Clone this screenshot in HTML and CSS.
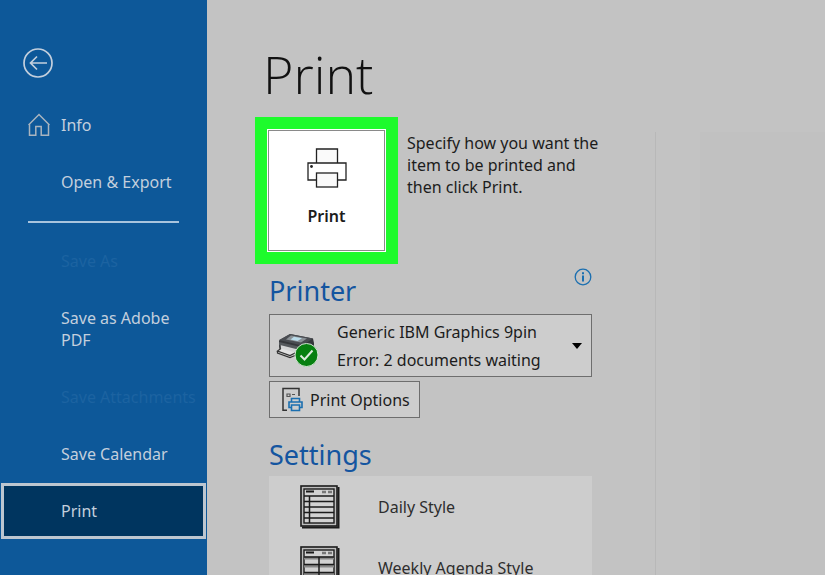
FILE: index.html
```html
<!DOCTYPE html>
<html lang="en">
<head>
  <meta charset="UTF-8">
  <title>Print</title>
  <link rel="stylesheet" href="styles.css">
</head>
<body>

<div class="app">

  <nav class="sidebar">
    <button class="back-btn" aria-label="Back">
      <svg width="30" height="30" viewBox="0 0 30 30" fill="none" stroke="currentColor" stroke-width="1.700">
        <circle cx="15" cy="15" r="14"/>
        <path d="M24 15H8M14 8.500L7.500 15l6.500 6.500"/>
      </svg>
    </button>

    <a class="nav-item" href="#info">
      <svg class="nav-icon" width="22" height="24" viewBox="0 0 22 24" fill="none" stroke="currentColor" stroke-width="1.500">
        <path d="M1.500 11V22.300H7.800V13.500H13.200V22.300H20.500V11M0.500 12L11 1.500L21.500 12"/>
      </svg>
      <span>Info</span>
    </a>
    <a class="nav-item" href="#open">Open &amp; Export</a>
    <hr class="nav-line">
    <a class="nav-item disabled" href="#save-as">Save As</a>
    <a class="nav-item" href="#adobe">Save as Adobe PDF</a>
    <a class="nav-item disabled" href="#attachments">Save Attachments</a>
    <a class="nav-item" href="#calendar">Save Calendar</a>
    <a class="nav-item active" href="#print">Print</a>
  </nav>

  <main class="main">
    <h1>Print</h1>

    <div class="columns">
      <div class="options">

        <div class="print-row">
          <div class="highlight">
            <button class="print-btn">
              <svg width="40" height="40" viewBox="0 0 40 40" fill="#fafafa" stroke="#222" stroke-width="1.300">
                <path d="M9.500 15V1H30.500V15"/>
                <path fill="#fff" d="M9.500 32H1V15H39V32H30.500"/>
                <rect x="9.500" y="25" width="21" height="14"/>
                <circle cx="4.500" cy="18.500" r="1.400" fill="#222" stroke="none"/>
              </svg>
              <span>Print</span>
            </button>
          </div>
          <p>Specify how you want the item to be printed and then click Print.</p>
        </div>

        <div class="section-head">
          <h2><label for="printer">Printer</label></h2>
          <button class="info-btn" aria-label="Printer information">
            <svg width="18" height="18" viewBox="0 0 18 18" fill="none" stroke="currentColor">
              <circle cx="9" cy="9" r="7.800" stroke-width="1.300"/>
              <path d="M9 7.500V13.500M9 4.200V6.200" stroke-width="2"/>
            </svg>
          </button>
        </div>

        <div class="printer-box">
          <svg class="printer-icon" width="43" height="36" viewBox="0 0 43 36">
            <path fill="#35373b" d="M3 9.500L14 3L37 7.500L38 12V20L24 23L3 15Z"/>
            <path fill="#4a4d52" d="M3 9L14 3L37 7.500L26 14.500Z"/>
            <path fill="#8b9196" d="M15 4.500L31 7.500L25 11.500L10 8.500Z"/>
            <path fill="#b9dcea" d="M18 5.800L26 7.300L21.500 10L14.500 8.500Z"/>
            <path fill="#55595d" d="M3 11L25 16V23L3 16.500Z"/>
            <path fill="#d4d5d6" d="M4 14L20 18V24L6 20Z"/>
            <path fill="#e2e2e2" stroke="#333" stroke-width="1.200" d="M5 17.500L1.500 20L14 24.500L20 21.500"/>
            <path fill="none" stroke="#333" stroke-width="1.200" d="M4 14V18M1.500 20V22L14 26.500L19 24.500"/>
            <circle cx="30.500" cy="24" r="11.500" fill="#078010" stroke="#d4e6d4" stroke-width="1"/>
            <path d="M24.500 24.500L28.500 28.500L36.500 19.500" fill="none" stroke="#dcebdc" stroke-width="2"/>
          </svg>
          <div class="printer-text">
            <select id="printer">
              <option>Generic IBM Graphics 9pin</option>
            </select>
            <span>Error: 2 documents waiting</span>
          </div>
          <svg class="caret" width="10" height="6" viewBox="0 0 10 6"><path d="M0 0H10L5 6Z"/></svg>
        </div>

        <button class="options-btn">
          <svg width="21" height="25" viewBox="0 0 21 25" fill="none" stroke="#333" stroke-width="1.500">
            <path d="M5 23.200H1V1.500H17V9"/>
            <path d="M5 7H8V9.500H5ZM10 7.500H13" stroke="#555" stroke-width="1.200"/>
            <g stroke="#1b6fb0" stroke-width="1.600">
              <path d="M9.500 15V11.500H17.500V15M9.500 20.500H7V15H20V20.500H17.500"/>
              <path d="M9.500 18H17.500V23.500H9.500Z"/>
            </g>
          </svg>
          Print Options
        </button>

        <h2>Settings</h2>
        <div class="style-list">
          <button class="style-item">
            <svg width="40" height="44" viewBox="0 0 40 44" fill="none" stroke="#1b1b1b">
              <path d="M38.500 2V42.500H2" stroke-width="2"/>
              <rect x="1" y="1" width="36" height="40" stroke-width="1.600" fill="#bdbdbd"/>
              <rect x="4" y="4" width="30" height="34" stroke-width="1.400" fill="#d2d2d2"/>
              <path d="M6 6.500H14" stroke-width="2"/>
              <path d="M22 7H26M28 7H32" stroke="#777" stroke-width="2.500"/>
              <path d="M4 11H34M4 16.500H34M4 22H34M4 27.500H34M4 33H34M9.500 11V38" stroke-width="1.500"/>
            </svg>
            <span>Daily Style</span>
          </button>
          <button class="style-item">
            <svg width="40" height="44" viewBox="0 0 40 44" fill="none" stroke="#1b1b1b">
              <path d="M38.500 2V42.500H2" stroke-width="2"/>
              <rect x="1" y="1" width="36" height="40" stroke-width="1.600" fill="#bdbdbd"/>
              <rect x="4" y="4" width="30" height="34" stroke-width="1.400" fill="#d2d2d2"/>
              <path d="M4 12H34M4 20H34M4 28H34" stroke="#888" stroke-width="3"/>
              <path d="M6 6.500H14" stroke-width="2"/>
              <path d="M22 7H26M28 7H32" stroke="#777" stroke-width="2.500"/>
              <path d="M4 11H34M4 18.500H34M4 26.500H34M19 11V38" stroke-width="1.500"/>
            </svg>
            <span>Weekly Agenda Style</span>
          </button>
        </div>

      </div>

      <div class="preview">
        <div class="preview-page"></div>
      </div>
    </div>
  </main>

</div>

</body>
</html>
```
FILE: styles.css
```css
* {
  box-sizing: border-box;
}

body {
  margin: 0;
  font-family: "Noto Sans", "Open Sans", sans-serif;
  font-size: 16px;
  line-height: 22px;
  color: #1c1c1c;
  background-color: #c3c3c3;
}

button, select {
  font: inherit;
  color: inherit;
  cursor: pointer;
}

svg {
  display: block;
  flex: none;
}

.app {
  display: flex;
  height: 100vh;
  overflow: hidden;
}

/* sidebar */
.sidebar {
  flex: 0 0 207px;
  display: flex;
  flex-direction: column;
  gap: 1px;
  padding: 48px 1px 0;
  background-color: #0d5899;
  color: #c3cfdd;
}

.back-btn {
  align-self: flex-start;
  margin: 0 0 18px 22px;
  padding: 0;
  border: none;
  background: none;
}

.nav-item {
  display: flex;
  align-items: center;
  padding: 17px 8px 17px 60px;
  color: inherit;
  text-decoration: none;
}

.nav-icon {
  margin: -1px 11px -1px -33px;
  color: #a9b4bf;
}

.nav-line {
  width: 151px;
  margin: 10px 0 9px 27px;
  border: none;
  border-top: 2px solid #a8c4de;
}

.nav-item.disabled {
  color: #1c63a1;
  white-space: nowrap;
}

.nav-item.active {
  padding: 14px 5px 14px 57px;
  border: 3px solid #bcc6d0;
  background-color: #00355f;
}

/* main area */
.main {
  flex: 1;
  display: flex;
  flex-direction: column;
  padding: 38px 0 0 48px;
}

h1 {
  margin: 0 0 7px 8px;
  font-family: "Open Sans", "Noto Sans", sans-serif;
  font-size: 52px;
  line-height: 72px;
  font-weight: 300;
  color: #111;
}

h2 {
  margin: 0;
  font-size: 27px;
  line-height: 38px;
  font-weight: 400;
  color: #1455a0;
}

.columns {
  flex: 1;
  display: flex;
}

.options {
  flex: 0 0 337px;
  padding-left: 14px;
}

.print-row {
  display: flex;
  gap: 9px;
  margin: 0 -10px 4px -14px;
}

.print-row p {
  margin: 15px 0 0;
}

.highlight {
  flex: none;
  padding: 13px;
  background-color: #1dfb2c;
}

.print-btn {
  display: flex;
  flex-direction: column;
  align-items: center;
  gap: 17px;
  width: 117px;
  padding: 17px 0 23px;
  border: 1px solid #8a8a8a;
  outline: 1px solid #fff;
  background-color: #fff;
  font-weight: 600;
}

.section-head {
  display: flex;
  justify-content: space-between;
  align-items: flex-start;
  margin-bottom: 4px;
}

.section-head h2 {
  padding-top: 4px;
}

.info-btn {
  padding: 0;
  border: none;
  background: none;
  color: #1b6fb0;
}

.printer-box {
  display: flex;
  align-items: center;
  height: 63px;
  padding: 0 9px 0 6px;
  border: 1px solid #6e6e6e;
  background-color: #cdcdcd;
}

.printer-icon {
  margin-top: 6px;
}

.printer-text {
  flex: 1;
  display: flex;
  flex-direction: column;
  gap: 6px;
  margin-left: 18px;
}

.printer-text select {
  padding: 0;
  border: none;
  background: none;
  appearance: none;
}

.options-btn {
  display: flex;
  align-items: center;
  gap: 7px;
  height: 37px;
  margin: 4px 0 18px;
  padding: 0 9px 0 12px;
  border: 1px solid #6e6e6e;
  background-color: #cdcdcd;
}

.style-list {
  margin-top: 2px;
  background-color: #cdcdcd;
}

.style-item {
  display: flex;
  align-items: center;
  gap: 38px;
  width: 100%;
  height: 61px;
  padding: 0 31px;
  border: none;
  background: none;
  color: #2e2e2e;
}

.preview {
  flex: 1;
  margin: 15px 0 0 63px;
  padding-left: 44px;
  border-left: 1px solid #b8b8b8;
}

.preview-page {
  height: 100%;
  background-color: #c1c1c1;
}
```
